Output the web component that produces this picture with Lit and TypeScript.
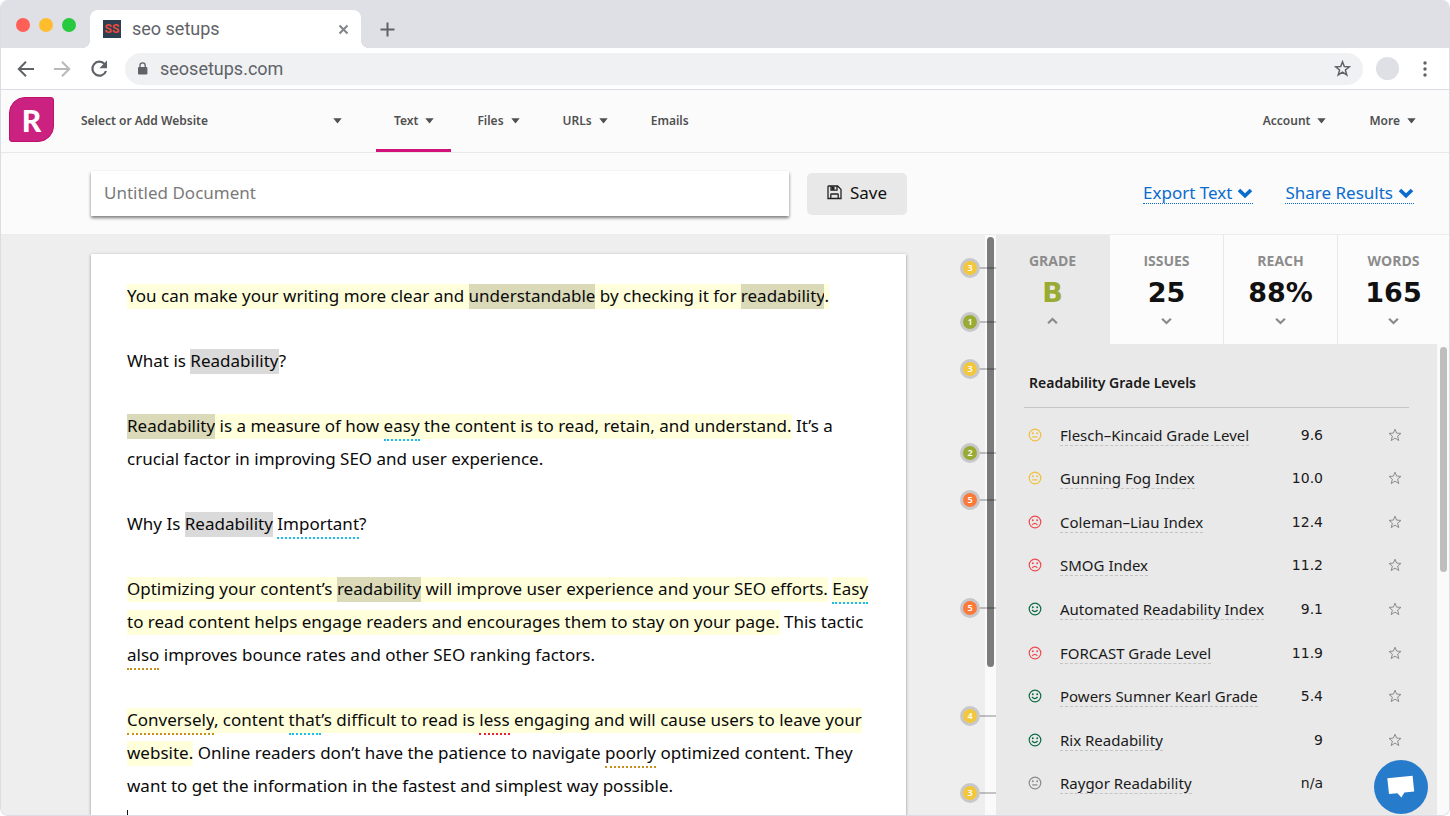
import { LitElement, html, css, svg } from "lit";
import { customElement, state } from "lit/decorators.js";
import { classMap } from "lit/directives/class-map.js";

type Mood = "good" | "fair" | "poor" | "none";

interface Score {
  mood: Mood;
  name: string;
  value: string;
}

interface Marker {
  top: number;
  count: number;
  level: "low" | "mid" | "high";
}

/* A run of document text: plain, or with the classes of its findings. */
type Run = string | [string, string];

const SCORES: Score[] = [
  { mood: "fair", name: "Flesch–Kincaid Grade Level", value: "9.6" },
  { mood: "fair", name: "Gunning Fog Index", value: "10.0" },
  { mood: "poor", name: "Coleman–Liau Index", value: "12.4" },
  { mood: "poor", name: "SMOG Index", value: "11.2" },
  { mood: "good", name: "Automated Readability Index", value: "9.1" },
  { mood: "poor", name: "FORCAST Grade Level", value: "11.9" },
  { mood: "good", name: "Powers Sumner Kearl Grade", value: "5.4" },
  { mood: "good", name: "Rix Readability", value: "9" },
  { mood: "none", name: "Raygor Readability", value: "n/a" },
];

const MARKERS: Marker[] = [
  { top: 33, count: 3, level: "mid" },
  { top: 87, count: 1, level: "low" },
  { top: 134, count: 3, level: "mid" },
  { top: 218, count: 2, level: "low" },
  { top: 265, count: 5, level: "high" },
  { top: 373, count: 5, level: "high" },
  { top: 481, count: 4, level: "mid" },
  { top: 558, count: 3, level: "mid" },
];

const TABS = [
  { label: "GRADE", value: "B" },
  { label: "ISSUES", value: "25" },
  { label: "REACH", value: "88%" },
  { label: "WORDS", value: "165" },
];

const PARAGRAPHS: Run[][] = [
  [
    ["hard", "You can make your writing more clear and "],
    ["hard long", "understandable"],
    ["hard", " by checking it for "],
    ["hard long", "readability"],
    ["hard", "."],
  ],
  ["What is ", ["long", "Readability"], "?"],
  [
    ["hard long", "Readability"],
    ["hard", " is a measure of how "],
    ["hard simple", "easy"],
    ["hard", " the content is to read, retain, and understand."],
    " It’s a crucial factor in improving SEO and user experience.",
  ],
  ["Why Is ", ["long", "Readability"], " ", ["simple", "Important"], "?"],
  [
    ["hard", "Optimizing your content’s "],
    ["hard long", "readability"],
    ["hard", " will improve user experience and your SEO efforts."],
    " ",
    ["hard simple", "Easy"],
    ["hard", " to read content helps engage readers and encourages them to stay on your page."],
    " This tactic ",
    ["style", "also"],
    " improves bounce rates and other SEO ranking factors.",
  ],
  [
    ["hard style", "Conversely"],
    ["hard", ", content "],
    ["hard simple", "that"],
    ["hard", "’s difficult to read is "],
    ["hard wrong", "less"],
    ["hard", " engaging and will cause users to leave your website."],
    " Online readers don’t have the patience to navigate ",
    ["style", "poorly"],
    " optimized content. They want to get the information in the fastest and simplest way possible.",
  ],
];

const caret = html`<svg class="caret" width="9" height="6" viewBox="0 0 9 6" aria-hidden="true">
  <path d="M0.3 0.3h8.4L4.9 4.9q-.4.5-.8 0z" fill="currentColor" />
</svg>`;

const chevron = (up: boolean) => html`<svg width="11" height="8" viewBox="0 0 11 8" aria-hidden="true">
  <path d=${up ? "M1.1 6.2 5.5 2 9.9 6.2" : "M1.1 1.8 5.5 6 9.9 1.8"} fill="none" stroke="#8a8a8a" stroke-width="2.2" />
</svg>`;

const thickChevron = html`<svg width="16" height="12" viewBox="0 0 16 12" aria-hidden="true">
  <path d="M2 3 8 8.8 14 3" fill="none" stroke="currentColor" stroke-width="3.6" />
</svg>`;

const mouths: Record<Mood, string> = {
  good: "M4 8q2.8 3.2 5.6 0",
  fair: "M4.2 8.9h5.2",
  poor: "M4.2 9.8q2.6-2.8 5.2 0",
  none: "M4.2 8.9h5.2",
};

const face = (mood: Mood) => html`<svg class="face ${mood}" width="14" height="14" viewBox="0 0 14 14" role="img" aria-label=${mood}>
  <circle cx="7" cy="7" r="5.8" fill="none" stroke="currentColor" stroke-width="1.2" />
  <circle cx="4.8" cy="5.3" r=".95" fill="currentColor" />
  <circle cx="9.2" cy="5.3" r=".95" fill="currentColor" />
  ${svg`<path d=${mouths[mood]} fill="none" stroke="currentColor" stroke-width="1.2" />`}
</svg>`;

@customElement("browser-bar")
class BrowserBar extends LitElement {
  static styles = css`
    :host {
      display: block;
      flex: none;
      font-family: Roboto, sans-serif;
      color: #5f6368;
    }
    button {
      border: 0;
      padding: 0;
      background: none;
      color: inherit;
      font: inherit;
      display: flex;
    }
    .strip {
      display: flex;
      height: 48px;
      background: #dee0e5;
      align-items: center;
      padding-left: 15px;
    }
    .lights {
      display: flex;
      gap: 9px;
      width: 74px;
      padding-top: 2px;
    }
    .light {
      width: 14px;
      height: 14px;
      border-radius: 50%;
    }
    .close { background: #ff5f57; }
    .shrink { background: #ffbd2e; }
    .grow { background: #27c93f; }
    .tab {
      position: relative;
      display: flex;
      align-items: center;
      box-sizing: border-box;
      width: 271px;
      height: 38px;
      align-self: flex-end;
      padding: 0 12px 0 13px;
      gap: 11px;
      border-radius: 8px 8px 0 0;
      background: #fff;
      font-size: 18px;
      line-height: 24px;
    }
    .tab::before,
    .tab::after {
      content: "";
      position: absolute;
      bottom: 0;
      width: 8px;
      height: 8px;
    }
    .tab::before {
      right: 100%;
      background: radial-gradient(circle at 0 0, transparent 8px, #fff 8px);
    }
    .tab::after {
      left: 100%;
      background: radial-gradient(circle at 100% 0, transparent 8px, #fff 8px);
    }
    .favicon {
      width: 18px;
      height: 18px;
      background: #2c3e50;
      color: #e94b3c;
      font-size: 12px;
      font-weight: 700;
      line-height: 18px;
      text-align: center;
    }
    .title { flex: 1; }
    .plus { margin: 11px 0 0 19px; }
    .tools {
      display: flex;
      align-items: center;
      height: 41px;
      padding: 0 22px 0 15px;
      background: #fff;
      border-bottom: 1px solid #dcdde4;
    }
    .arrows {
      display: flex;
      gap: 16px;
      width: 109px;
    }
    .dim { opacity: 0.45; }
    .address {
      flex: 1;
      display: flex;
      align-items: center;
      height: 32px;
      border-radius: 16px;
      background: #f0f1f3;
      padding: 0 12px 0 12px;
      gap: 12px;
    }
    .address input {
      flex: 1;
      border: 0;
      padding: 0;
      outline: 0;
      background: none;
      color: inherit;
      font: 18px/24px Roboto, sans-serif;
    }
    .avatar {
      width: 23px;
      height: 23px;
      margin: 0 24px 0 13px;
      border-radius: 50%;
      background: #dee0e5;
    }
  `;

  render() {
    return html`
      <div class="strip">
        <div class="lights">
          <span class="light close"></span><span class="light shrink"></span><span class="light grow"></span>
        </div>
        <div class="tab">
          <span class="favicon">SS</span>
          <span class="title">seo setups</span>
          <button aria-label="Close tab">
            <svg width="11" height="11" viewBox="0 0 11 11">
              <path d="M1.5 1.5 9.5 9.5M9.5 1.5 1.5 9.5" stroke="#808388" stroke-width="2" />
            </svg>
          </button>
        </div>
        <button class="plus" aria-label="New tab">
          <svg width="15" height="15" viewBox="0 0 15 15">
            <path d="M7.5 0.5v14M.5 7.5h14" stroke="currentColor" stroke-width="2" />
          </svg>
        </button>
      </div>
      <div class="tools">
        <div class="arrows">
          <button aria-label="Back">
            <svg width="20" height="20" viewBox="0 0 20 20">
              <path d="M18 10H3.5M10 2.8 2.8 10 10 17.2" fill="none" stroke="currentColor" stroke-width="2" />
            </svg>
          </button>
          <button class="dim" aria-label="Forward">
            <svg width="20" height="20" viewBox="0 0 20 20">
              <path d="M2 10H16.5M10 2.8 17.2 10 10 17.2" fill="none" stroke="currentColor" stroke-width="2" />
            </svg>
          </button>
          <button aria-label="Reload">
            <svg width="22" height="20" viewBox="0 0 22 20">
              <path d="M16.6 5A7 7 0 1 0 18 12" fill="none" stroke="currentColor" stroke-width="2.2" />
              <path d="M19 1.6v7.6h-7.6z" fill="currentColor" />
            </svg>
          </button>
        </div>
        <div class="address">
          <svg width="11" height="14" viewBox="0 0 11 14" aria-hidden="true">
            <rect x="1" y="5" width="9.4" height="7.6" rx="1" fill="currentColor" />
            <path d="M3 5.5V3.4a2.6 2.6 0 0 1 5.2 0v2.1" fill="none" stroke="currentColor" stroke-width="1.3" />
          </svg>
          <input aria-label="Address" value="seosetups.com" />
          <button aria-label="Bookmark">
            <svg width="17" height="17" viewBox="0 0 17 17">
              <path
                d="M8.5 1.8 10.3 6.5 15.4 6.8 11.4 10 12.8 15 8.5 12.2 4.2 15 5.6 10 1.6 6.8 6.7 6.5z"
                fill="none"
                stroke="currentColor"
                stroke-width="1.5"
              />
            </svg>
          </button>
        </div>
        <span class="avatar"></span>
        <button aria-label="Menu">
          <svg width="4" height="16" viewBox="0 0 4 16">
            <circle cx="2" cy="2" r="1.7" fill="currentColor" />
            <circle cx="2" cy="8" r="1.7" fill="currentColor" />
            <circle cx="2" cy="14" r="1.7" fill="currentColor" />
          </svg>
        </button>
      </div>
    `;
  }
}

@customElement("app-header")
class AppHeader extends LitElement {
  static styles = css`
    :host {
      display: flex;
      flex: none;
      align-items: stretch;
      height: 62px;
      padding: 0 16px 0 8px;
      border-bottom: 1px solid #e8e8e8;
      color: #505050;
      font: 600 12px/18px "Noto Sans", sans-serif;
    }
    .logo {
      display: flex;
      align-items: center;
      width: 71px;
    }
    .mark {
      display: grid;
      place-items: center;
      width: 45px;
      height: 45px;
      box-sizing: border-box;
      border: 1px solid #c00e6c;
      border-radius: 16px 3px 16px 3px;
      background: #cb2180;
      color: #fff;
      font: 900 30px/44px Lato, sans-serif;
      text-decoration: none;
      margin-bottom: 3px;
    }
    .site {
      display: grid;
      align-items: center;
      width: 262px;
      margin-right: 34px;
      padding-bottom: 1px;
    }
    .site > * { grid-area: 1 / 1; }
    .site .caret {
      justify-self: end;
      pointer-events: none;
    }
    select {
      appearance: none;
      border: 0;
      padding: 0 0 0 1px;
      background: none;
      color: inherit;
      font: inherit;
    }
    nav {
      display: flex;
      gap: 8px;
    }
    .account { margin-left: auto; }
    nav button {
      display: flex;
      align-items: center;
      gap: 7px;
      border: 0;
      border-bottom: 3px solid transparent;
      padding: 2px 17px 0 18px;
      background: none;
      color: inherit;
      font: inherit;
    }
    nav .current { border-color: #d01278; }
  `;

  render() {
    return html`
      <div class="logo"><a class="mark" href="#" aria-label="Home">R</a></div>
      <div class="site">
        <select aria-label="Website">
          <option>Select or Add Website</option>
        </select>
        ${caret}
      </div>
      <nav>
        <button class="current">Text ${caret}</button>
        <button>Files ${caret}</button>
        <button>URLs ${caret}</button>
        <button>Emails</button>
      </nav>
      <nav class="account">
        <button>Account ${caret}</button>
        <button>More ${caret}</button>
      </nav>
    `;
  }
}

@customElement("document-bar")
class DocumentBar extends LitElement {
  static styles = css`
    :host {
      display: flex;
      flex: none;
      align-items: center;
      height: 81px;
      border-bottom: 1px solid #ececec;
      font: 17px/22px "Noto Sans", sans-serif;
    }
    .left {
      flex: 1;
      min-width: 0;
      display: flex;
      align-items: center;
      gap: 18px;
      padding: 0 78px 0 90px;
    }
    input {
      flex: 1;
      min-width: 0;
      height: 45px;
      box-sizing: border-box;
      border: 0;
      padding: 0 13px 2px;
      background: #fff;
      box-shadow: 0 2px 3px rgba(0, 0, 0, 0.5);
      color: #333;
      font: inherit;
    }
    input::placeholder {
      color: #7a7a7a;
      opacity: 1;
    }
    .save {
      display: flex;
      align-items: center;
      justify-content: center;
      gap: 8px;
      width: 100px;
      height: 42px;
      border: 0;
      border-radius: 5px;
      padding: 0 0 2px;
      background: #e8e8e8;
      color: #111;
      font: inherit;
    }
    .links {
      flex: none;
      box-sizing: border-box;
      display: flex;
      justify-content: flex-end;
      gap: 32px;
      width: 464px;
      padding-right: 35px;
    }
    a {
      display: flex;
      align-items: center;
      gap: 5px;
      border-bottom: 1px dotted #0a6cce;
      color: #0a6cce;
      text-decoration: none;
      line-height: 20px;
    }
  `;

  render() {
    return html`
      <div class="left">
        <input aria-label="Document title" placeholder="Untitled Document" />
        <button class="save">
          <svg width="15" height="15" viewBox="0 0 15 15" aria-hidden="true">
            <path
              d="M1.5 1H10.6L14 4.4V13.5H1V1.5zM3.8 13.5V9.6q0-.6.6-.6h6.2q.6 0 .6.6v3.9M4 1V5.2H10V1"
              fill="none"
              stroke="#222"
              stroke-width="1.3"
            />
            <path d="M4.5 1.5h3v3.4h-3z" fill="#222" />
          </svg>
          Save
        </button>
      </div>
      <div class="links">
        <a href="#">Export Text ${thickChevron}</a>
        <a href="#">Share Results ${thickChevron}</a>
      </div>
    `;
  }
}

@customElement("text-editor")
class TextEditor extends LitElement {
  static styles = css`
    :host {
      display: flex;
      flex: 1;
      min-width: 0;
      background: #eee;
    }
    .desk {
      flex: 1;
      display: flex;
      padding: 19px 0 0 90px;
    }
    .paper {
      flex: 1;
      padding: 25px 36px 0;
      background: #fff;
      box-shadow: 0 1px 3px rgba(0, 0, 0, 0.4);
      outline: 0;
      color: #0a0a0a;
      font: 17px/33px "Noto Sans", sans-serif;
    }
    p { margin: 0 0 32px; }
    p:nth-last-child(-n + 2) { margin: 0; }
    .long {
      padding-bottom: 2px;
      background: #dadada;
    }
    .hard {
      padding-bottom: 2px;
      background: #ffffdc padding-box;
    }
    .hard.long { background: #dadab9; }
    .simple, .style, .wrong {
      padding-bottom: 2px;
      border-bottom: 2px dotted #19bfee;
    }
    .style { border-color: #c8901a; }
    .wrong { border-color: #ee2030; }
    .cursor {
      display: inline-block;
      width: 1px;
      height: 20px;
      background: #111;
      vertical-align: middle;
    }
    .markers {
      position: relative;
      width: 79px;
    }
    .marker {
      position: absolute;
      right: -11px;
      display: flex;
      align-items: center;
      width: 36px;
      height: 20px;
      margin-top: -10px;
    }
    .marker::after {
      content: "";
      flex: 1;
      height: 2px;
      background: rgba(0, 0, 0, 0.22);
    }
    .count {
      width: 14px;
      height: 14px;
      border: 3px solid #c8c8cb;
      border-radius: 50%;
      color: #fff;
      font: 600 9px/14px "Noto Sans", sans-serif;
      text-align: center;
    }
    .low { background: #9aab33; }
    .mid { background: #f3c73c; }
    .high { background: #fb7a3a; }
    .track {
      width: 11px;
      padding-top: 2px;
      background: #fafafa;
    }
    .thumb {
      width: 7px;
      height: 430px;
      margin: 0 auto;
      border-radius: 4px;
      background: #7b7b7b;
    }
  `;

  render() {
    return html`
      <div class="desk">
        <div class="paper" role="textbox" aria-multiline="true" aria-label="Document text">
          ${PARAGRAPHS.map(
            (runs) => html`<p>${runs.map((run) => (typeof run === "string" ? run : html`<span class=${run[0]}>${run[1]}</span>`))}</p>`
          )}
          <p><span class="cursor"></span></p>
        </div>
      </div>
      <div class="markers">
        ${MARKERS.map(
          (m) => html`<div class="marker" style="top:${m.top}px"><span class="count ${m.level}">${m.count}</span></div>`
        )}
      </div>
      <div class="track"><div class="thumb"></div></div>
    `;
  }
}

@customElement("score-panel")
class ScorePanel extends LitElement {
  @state() private open = 0;

  static styles = css`
    :host {
      display: flex;
      flex-direction: column;
      flex: none;
      width: 453px;
      background: #e9e9e9;
      font: 15px/20px "Noto Sans", sans-serif;
      color: #1a1a1a;
    }
    button {
      border: 0;
      padding: 0;
      background: none;
      font: inherit;
      color: inherit;
    }
    .tabs {
      display: grid;
      grid-template-columns: repeat(3, 114px) 1fr;
      flex: none;
      height: 109px;
    }
    .tabs button {
      display: flex;
      flex-direction: column;
      align-items: center;
      padding-top: 16px;
      border-right: 1px solid #e8e8e8;
      background: #fcfcfc;
    }
    .tabs button:last-child { border-right: 0; }
    .tabs .open {
      background: #e9e9e9;
      border-right-color: #e9e9e9;
    }
    .label {
      color: #8c8c8c;
      font: 700 14px/20px "Open Sans", sans-serif;
    }
    .value {
      margin: 4px 0 6px;
      color: #111;
      font: 700 27px/36px "DejaVu Sans", sans-serif;
    }
    .open .value { color: #9aab33; }
    .body {
      display: flex;
      flex: 1;
      min-height: 0;
    }
    .scores {
      flex: 1;
      padding: 26px 28px 0;
    }
    h2 {
      margin: 0;
      padding: 0 5px 11px;
      border-bottom: 1px solid #c6c6c6;
      font: 600 14px/26px "Noto Sans", sans-serif;
    }
    table {
      width: 100%;
      height: 392px;
      margin-top: 5px;
      border-collapse: collapse;
    }
    td {
      padding: 0;
      vertical-align: middle;
      white-space: nowrap;
    }
    td svg { display: block; }
    .mood {
      width: 32px;
      padding-left: 4px;
    }
    .number {
      width: 44px;
      font: 14px/20px "DejaVu Sans", sans-serif;
      text-align: right;
    }
    .star {
      width: 79px;
      padding-right: 7px;
    }
    .star button { margin-left: auto; display: block; }
    a {
      border-bottom: 1px dashed #c4c4c4;
      color: inherit;
      text-decoration: none;
    }
    .good { color: #0c6b46; }
    .fair { color: #f0c03c; }
    .poor { color: #f04a50; }
    .none { color: #8a8a8a; }
    .track {
      flex: none;
      width: 12px;
      padding-top: 3px;
      background: #fafafa;
    }
    .thumb {
      width: 7px;
      height: 225px;
      margin-left: 3px;
      border-radius: 4px;
      background: #bebebe;
    }
  `;

  render() {
    return html`
      <div class="tabs">
        ${TABS.map(
          (t, i) => html`<button class=${classMap({ open: i === this.open })} @click=${() => (this.open = i)}>
            <span class="label">${t.label}</span>
            <span class="value">${t.value}</span>
            ${chevron(i === this.open)}
          </button>`
        )}
      </div>
      <div class="body">
        <div class="scores">
          <h2>Readability Grade Levels</h2>
          <table>
            ${SCORES.map(
              (s) => html`<tr>
                <td class="mood">${face(s.mood)}</td>
                <td><a href="#">${s.name}</a></td>
                <td class="number">${s.value}</td>
                <td class="star">
                  <button aria-label="Mark ${s.name}">
                    <svg width="14" height="14" viewBox="0 0 14 14">
                      <path
                        d="M7 1.2 8.6 5.1 13 5.4 9.6 8.1 10.8 12.6 7 10.1 3.2 12.6 4.4 8.1 1 5.4 5.4 5.1z"
                        fill="none"
                        stroke="#8c8c8c"
                      />
                    </svg>
                  </button>
                </td>
              </tr>`
            )}
          </table>
        </div>
        <div class="track"><div class="thumb"></div></div>
      </div>
    `;
  }
}

@customElement("app-root")
class AppRoot extends LitElement {
  static styles = css`
    :host {
      position: relative;
      display: flex;
      flex-direction: column;
      box-sizing: border-box;
      height: 100vh;
      overflow: hidden;
      border: 1px solid #dcdde4;
      border-top: 0;
      border-radius: 8px;
      background: #fbfbfb;
    }
    .work {
      flex: 1;
      display: flex;
      min-height: 0;
      overflow: hidden;
    }
    .chat {
      position: absolute;
      right: 21px;
      bottom: 1px;
      display: grid;
      place-items: center;
      width: 54px;
      height: 54px;
      border: 0;
      padding: 0;
      border-radius: 50%;
      background: #267bcb;
    }
  `;

  render() {
    return html`
      <browser-bar></browser-bar>
      <app-header></app-header>
      <document-bar></document-bar>
      <div class="work">
        <text-editor></text-editor>
        <score-panel></score-panel>
      </div>
      <button class="chat" aria-label="Open chat">
        <svg width="28" height="24" viewBox="0 0 28 24">
          <path d="M.3 3.2 25.6.8 27.2 16.4 17.4 17.6 14.4 22.4 10.4 18.3 2 19z" fill="#fff" />
        </svg>
      </button>
    `;
  }
}
